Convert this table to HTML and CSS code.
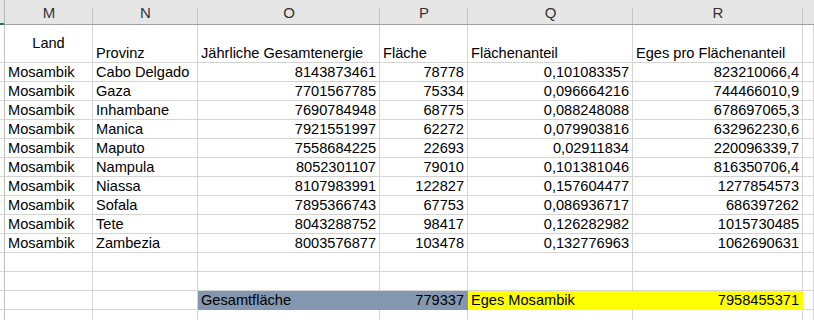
FILE: index.html
```html
<!DOCTYPE html>
<html lang="de">
<head>
<meta charset="utf-8">
<title>Mosambik</title>
<link rel="stylesheet" href="styles.css">
</head>
<body>
<div class="sheet">
  <div class="ch gut"><span class="sel"></span></div>
  <div class="ch">M</div><div class="ch">N</div><div class="ch">O</div><div class="ch">P</div><div class="ch">Q</div><div class="ch">R</div><div class="ch last"></div>

  <div class="c gut tall"></div>
  <div class="c tall mid">Land</div>
  <div class="c tall">Provinz</div>
  <div class="c tall">Jährliche Gesamtenergie</div>
  <div class="c tall">Fläche</div>
  <div class="c tall">Flächenanteil</div>
  <div class="c tall">Eges pro Flächenanteil</div>
  <div class="c tall"></div>

  <div class="c gut"></div><div class="c">Mosambik</div><div class="c">Cabo Delgado</div><div class="c n">8143873461</div><div class="c n">78778</div><div class="c n">0,101083357</div><div class="c n">823210066,4</div><div class="c"></div>
  <div class="c gut"></div><div class="c">Mosambik</div><div class="c">Gaza</div><div class="c n">7701567785</div><div class="c n">75334</div><div class="c n">0,096664216</div><div class="c n">744466010,9</div><div class="c"></div>
  <div class="c gut"></div><div class="c">Mosambik</div><div class="c">Inhambane</div><div class="c n">7690784948</div><div class="c n">68775</div><div class="c n">0,088248088</div><div class="c n">678697065,3</div><div class="c"></div>
  <div class="c gut"></div><div class="c">Mosambik</div><div class="c">Manica</div><div class="c n">7921551997</div><div class="c n">62272</div><div class="c n">0,079903816</div><div class="c n">632962230,6</div><div class="c"></div>
  <div class="c gut"></div><div class="c">Mosambik</div><div class="c">Maputo</div><div class="c n">7558684225</div><div class="c n">22693</div><div class="c n">0,02911834</div><div class="c n">220096339,7</div><div class="c"></div>
  <div class="c gut"></div><div class="c">Mosambik</div><div class="c">Nampula</div><div class="c n">8052301107</div><div class="c n">79010</div><div class="c n">0,101381046</div><div class="c n">816350706,4</div><div class="c"></div>
  <div class="c gut"></div><div class="c">Mosambik</div><div class="c">Niassa</div><div class="c n">8107983991</div><div class="c n">122827</div><div class="c n">0,157604477</div><div class="c n">1277854573</div><div class="c"></div>
  <div class="c gut"></div><div class="c">Mosambik</div><div class="c">Sofala</div><div class="c n">7895366743</div><div class="c n">67753</div><div class="c n">0,086936717</div><div class="c n">686397262</div><div class="c"></div>
  <div class="c gut"></div><div class="c">Mosambik</div><div class="c">Tete</div><div class="c n">8043288752</div><div class="c n">98417</div><div class="c n">0,126282982</div><div class="c n">1015730485</div><div class="c"></div>
  <div class="c gut"></div><div class="c">Mosambik</div><div class="c">Zambezia</div><div class="c n">8003576877</div><div class="c n">103478</div><div class="c n">0,132776963</div><div class="c n">1062690631</div><div class="c"></div>

  <div class="c gut"></div><div class="c"></div><div class="c"></div><div class="c"></div><div class="c"></div><div class="c"></div><div class="c"></div><div class="c"></div>
  <div class="c gut"></div><div class="c"></div><div class="c"></div><div class="c"></div><div class="c"></div><div class="c"></div><div class="c"></div><div class="c"></div>

  <div class="c gut"></div><div class="c"></div><div class="c"></div><div class="c gray">Gesamtfläche</div><div class="c n gray">779337</div><div class="c yellow">Eges Mosambik</div><div class="c n yellow">7958455371</div><div class="c"></div>

  <div class="c gut end"></div><div class="c end"></div><div class="c end"></div><div class="c end"></div><div class="c end"></div><div class="c end"></div><div class="c end"></div><div class="c end"></div>
</div>
</body>
</html>
```

FILE: styles.css
```css
html, body {
  margin: 0;
  padding: 0;
  background: #ffffff;
}

.sheet {
  display: grid;
  grid-template-columns: 5px 88px 105px 182px 88px 165px 170px 1fr;
  grid-template-rows: 25px 38px repeat(13, 19px) 10px;
  width: 814px;
  height: 324px;
  font-family: "Liberation Sans", Arial, sans-serif;
  font-size: 14.6px;
  color: #000;
}

.ch {
  position: relative;
  background: #e6e6e6;
  border-bottom: 1px solid #9f9f9f;
  color: #333333;
  font-size: 15px;
  display: flex;
  align-items: center;
  justify-content: center;
  padding-top: 1px;
  box-sizing: border-box;
}

.ch::after {
  content: "";
  position: absolute;
  right: 0;
  top: 8px;
  bottom: 0;
  width: 1px;
  background: #c6c6c6;
}

.ch.last::after { display: none; }

.ch.gut::after {
  top: 0;
  background: #b8b8b8;
}

.sel {
  position: absolute;
  left: 0;
  bottom: -1px;
  width: 4px;
  height: 2px;
  background: #217346;
}

.c {
  box-sizing: border-box;
  border-right: 1px solid #d4d4d4;
  border-bottom: 1px solid #d4d4d4;
  padding: 0 3px 0 3px;
  display: flex;
  align-items: flex-end;
  line-height: 17px;
  white-space: nowrap;
  overflow: hidden;
}

.c.gut {
  border-right-color: #c0c0c0;
  padding: 0;
}

.c.n { justify-content: flex-end; }

.c.mid {
  justify-content: center;
  align-items: center;
  padding-bottom: 1px;
}

.c.gray {
  background: #8497b0;
  border-color: #8497b0;
}

.c.yellow {
  background: #ffff00;
  border-color: #ffff00;
}

.c.end { border-bottom: none; }
```
